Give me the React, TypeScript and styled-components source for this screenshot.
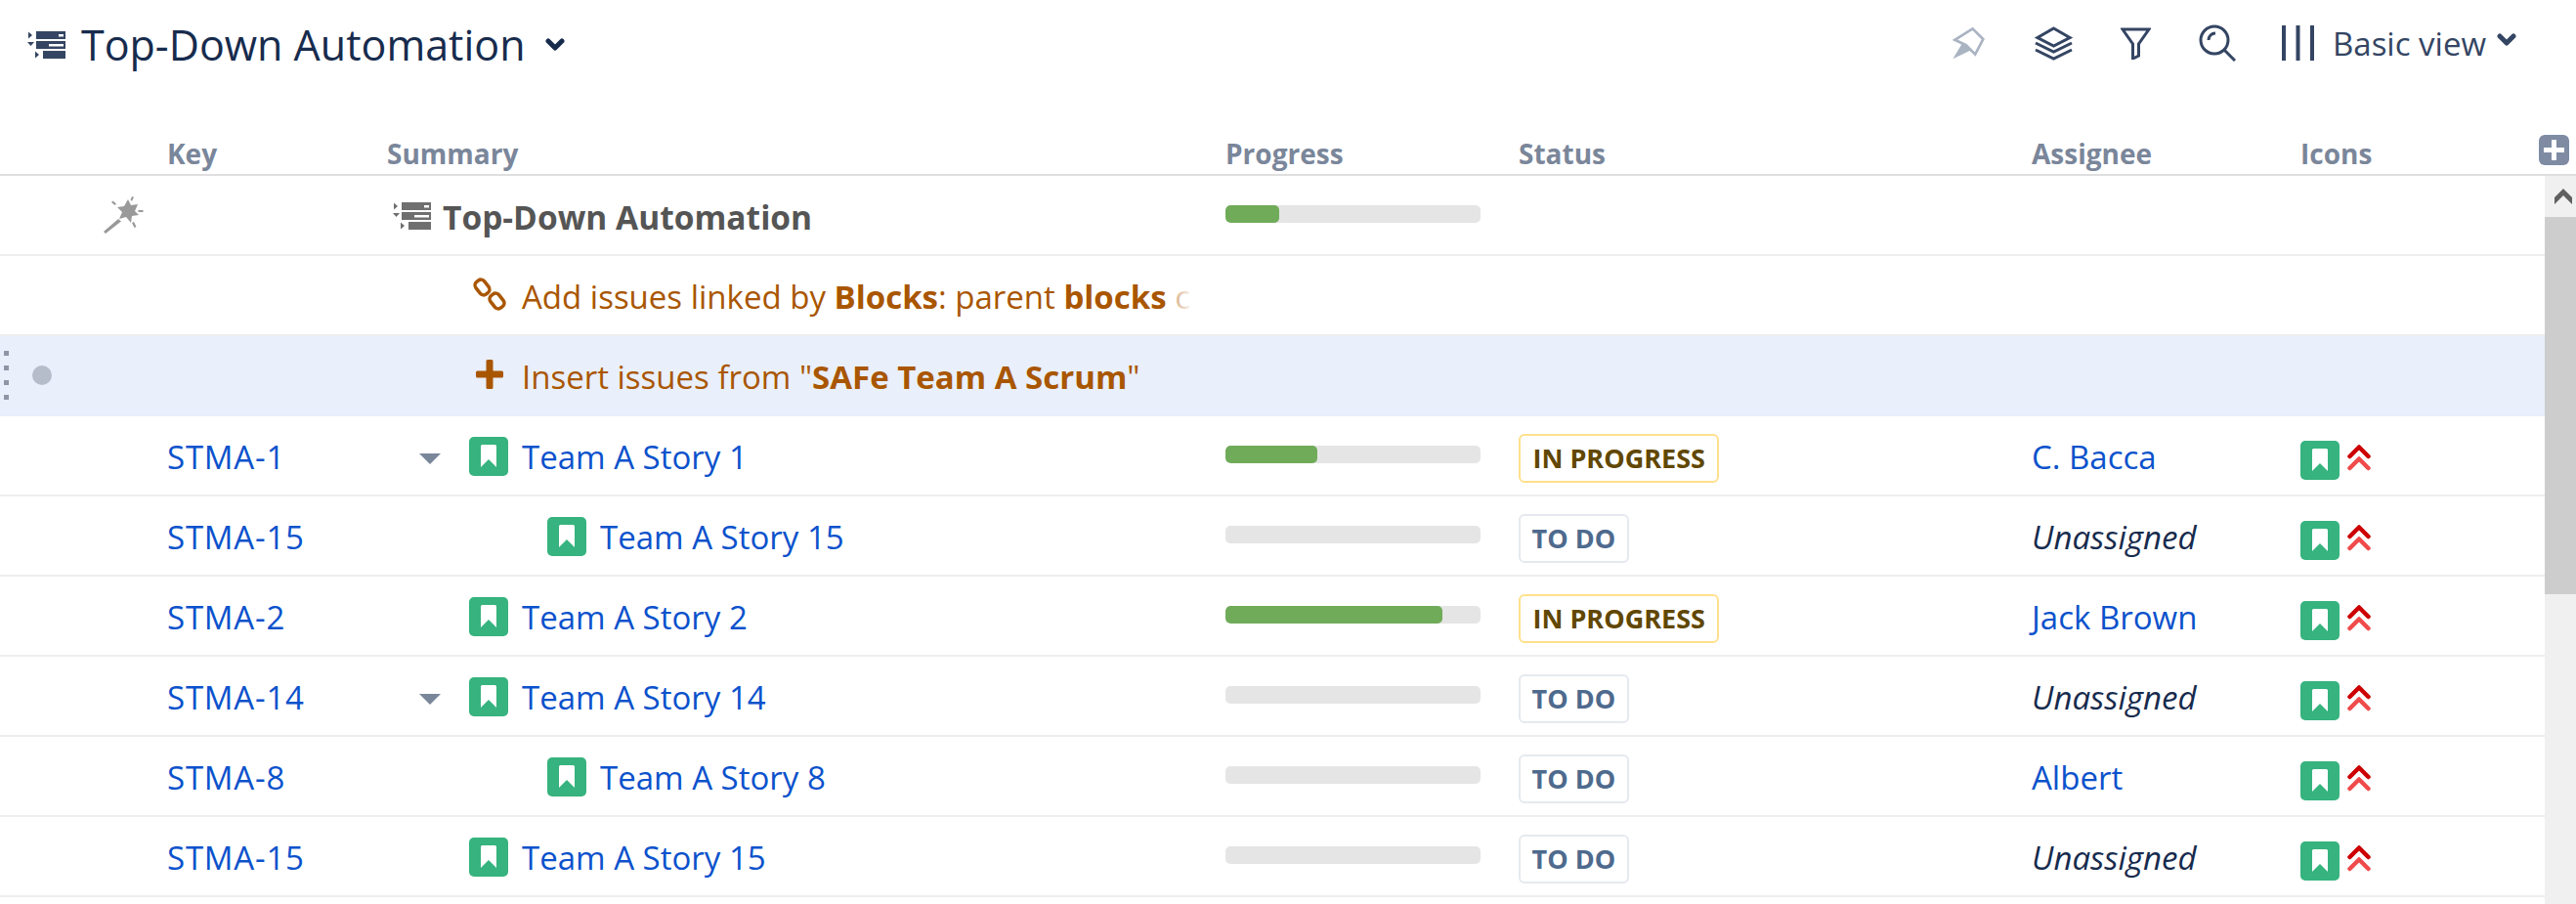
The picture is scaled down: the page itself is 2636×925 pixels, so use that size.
import styled, { createGlobalStyle } from "styled-components";

const GlobalStyle = createGlobalStyle`
  html, body {
    margin: 0;
    padding: 0;
    background: #fff;
    font-family: "Open Sans", "Noto Sans", sans-serif;
  }
`;

const Page = styled.div`
  display: flex;
  flex-direction: column;
  height: 925px;
  overflow: hidden;
`;

const Toolbar = styled.div`
  display: flex;
  justify-content: space-between;
  align-items: flex-start;
  height: 130px;
  box-sizing: border-box;
  padding: 24px 61px 0 28px;
`;

const TitleGroup = styled.div`
  display: flex;
  align-items: center;
  height: 44px;
  color: #172b4d;
`;

const Title = styled.div`
  font-size: 43px;
  line-height: 44px;
  margin: 0 20px 0 16px;
`;

const ToolGroup = styled.div`
  display: flex;
  align-items: center;
  gap: 49px;
  height: 40px;
  color: #344563;
`;

const ViewPicker = styled.div`
  display: flex;
  align-items: center;
  gap: 19px;
  font-size: 33px;
  margin-left: -2px;
`;

const ViewLabel = styled.span`
  margin-right: -8px;
`;

const ViewChevron = styled.div`
  display: flex;
  margin-top: -6px;
`;

const grid = "171px 225px 858px 300px 525px 275px 200px 1fr";

const HeaderRow = styled.div`
  display: grid;
  grid-template-columns: ${grid};
  align-items: center;
  height: 50px;
  box-sizing: border-box;
  border-bottom: 2px solid #dfdfdf;
`;

const HeaderCell = styled.div`
  font-size: 28px;
  font-weight: 700;
  color: #7a869a;
  margin-top: 6px;
`;

const AddColumn = styled.div`
  display: flex;
  justify-content: flex-end;
  padding-right: 7px;
  margin-top: -2px;
`;

const Body = styled.div`
  display: flex;
  flex: 1;
  min-height: 0;
`;

const Rows = styled.div`
  flex: 1;
  min-width: 0;
`;

const Row = styled.div<{ $selected?: boolean }>`
  display: grid;
  grid-template-columns: ${grid};
  align-items: center;
  height: 82px;
  box-sizing: border-box;
  padding-top: 3px;
  font-size: 33px;
  background: ${(p) => (p.$selected ? "#e9effb" : "#fff")};
  border-bottom: 2px solid ${(p) => (p.$selected ? "#e9effb" : "#eeeeee")};
`;

const Gutter = styled.div<{ $wand?: boolean }>`
  display: flex;
  align-items: center;
  gap: 24px;
  margin-top: -3px;
  padding-left: ${(p) => (p.$wand ? "105px" : "4px")};
`;

const Grip = styled.div`
  display: grid;
  gap: 10px;
`;

const GripDot = styled.div`
  width: 5px;
  height: 5px;
  background: #8e95a5;
`;

const Bullet = styled.div`
  width: 20px;
  height: 20px;
  border-radius: 50%;
  background: #b6bdca;
`;

const KeyLink = styled.a`
  color: #0b52cc;
  letter-spacing: 0.8px;
`;

const Summary = styled.div<{ $indent: number }>`
  display: flex;
  align-items: center;
  padding-left: ${(p) => p.$indent}px;
  color: #0b52cc;
  white-space: nowrap;
`;

const Disclosure = styled.div`
  width: 0;
  height: 0;
  margin: 4px 29px 0 -51px;
  border-left: 11px solid transparent;
  border-right: 11px solid transparent;
  border-top: 11px solid #7a869a;
`;

const StoryIcon = styled.div<{ $lower?: boolean }>`
  display: flex;
  align-items: center;
  justify-content: center;
  flex: none;
  width: 40px;
  height: 40px;
  margin-top: ${(p) => (p.$lower ? "6px" : "-2px")};
  border-radius: 5px;
  background: #36b37e;
`;

const SummaryText = styled.span`
  margin-left: 14px;
`;

const RootSummary = styled.div`
  display: flex;
  align-items: center;
  padding-left: 6px;
  font-weight: 700;
  font-size: 33.5px;
  color: #555555;
  white-space: nowrap;
`;

const RootText = styled.span`
  margin-left: 12px;
`;

const Generator = styled.div`
  position: relative;
  display: flex;
  align-items: center;
  width: 836px;
  padding-left: 88px;
  box-sizing: border-box;
  overflow: hidden;
  white-space: nowrap;
  color: #a95600;
`;

const GeneratorIcon = styled.div`
  display: flex;
  align-items: center;
  justify-content: center;
  flex: none;
  width: 34px;
  height: 36px;
  margin-top: -6px;
`;

const GeneratorText = styled.span`
  margin-left: 16px;
`;

const Fade = styled.div`
  position: absolute;
  top: 0;
  right: 0;
  bottom: 0;
  width: 36px;
  background: linear-gradient(to right, rgba(255, 255, 255, 0.4), #fff 70%);
`;

const ProgressTrack = styled.div`
  width: 261px;
  height: 18px;
  margin-top: -6px;
  border-radius: 5px;
  background: #e5e5e5;
  overflow: hidden;
`;

const ProgressFill = styled.div<{ $percent: number }>`
  width: ${(p) => p.$percent}%;
  height: 100%;
  border-radius: 5px;
  background: #70ab59;
`;

const Lozenge = styled.div<{ $tone: "progress" | "todo" }>`
  display: inline-flex;
  align-items: center;
  justify-self: start;
  height: 50px;
  box-sizing: border-box;
  padding: 0 ${(p) => (p.$tone === "progress" ? "12.5px" : "11.5px")};
  margin-top: 2px;
  border-radius: 6px;
  font-size: 27px;
  font-weight: 700;
  background: #fff;
  border: 2px solid ${(p) => (p.$tone === "progress" ? "#ffe08c" : "#e5e9ef")};
  color: ${(p) => (p.$tone === "progress" ? "#614700" : "#4e6a8d")};
`;

const Assignee = styled.a`
  color: #0b52cc;
`;

const Unassigned = styled.span`
  color: #172b4d;
  font-style: italic;
`;

const IconCell = styled.div`
  display: flex;
  align-items: center;
  gap: 8px;
`;

const Scrollbar = styled.div`
  display: flex;
  flex-direction: column;
  flex: none;
  width: 32px;
  background: #f0f0f0;
`;

const ScrollArrow = styled.div`
  display: flex;
  align-items: center;
  justify-content: center;
  height: 42px;
  padding-left: 6px;
`;

const ScrollThumb = styled.div`
  height: 386px;
  background: #cdcdcd;
`;

const StructureIcon = ({ color, size }: { color: string; size: number }) => (
  <svg width={size} height={size * 0.72} viewBox="0 0 39 28" fill={color} style={{ flex: "none" }}>
    <path d="M1 0.5 5 4 1 7.500Z" />
    <path d="M0 11h7l-3.500 4z" />
    <path d="M8 20.500 12 24 8 27.500Z" />
    <path fillRule="evenodd" d="M9 0h30v8H9zM32 3v2.500h5V3z" />
    <path fillRule="evenodd" d="M9 10h30v8H9zM22 13v2.500h15V13z" />
    <path d="M16 20h23v8H16z" />
  </svg>
);

const SmallChevron = ({ color }: { color: string }) => (
  <svg width="20" height="14" viewBox="0 0 20 14" fill="none">
    <path d="M3 3l7 7 7-7" stroke={color} strokeWidth="5" strokeLinecap="round" strokeLinejoin="round" />
  </svg>
);

const Wand = () => (
  <svg width="42" height="38" viewBox="0 0 42 38" fill="#999">
    <path d="M26 3l3 6 7-1-3 7 4 4-7 1-1 7-5-6-7 2 3-7-5-5 7-1z" />
    <path d="M16 23l3 2.500L3 38l-2-2z" />
    <path d="M30 0l2 .7-2 4-1.500-1zM9 6l1.500-1.500 3.500 3-1.500 1.500zM36.500 14h5v2h-5zM30 27l2-1 2.500 5-2 1z" />
  </svg>
);

const PinIcon = () => (
  <svg width="37" height="37" viewBox="75 40 110 110" fill="none" stroke="#aab3c2" strokeWidth="8">
    <path d="M142 50 174 82 150 128 122 100 88 84 Z" />
    <path d="M82 142 112 92 136 116Z" fill="#aab3c2" stroke="none" />
  </svg>
);

const LayersIcon = () => (
  <svg width="39" height="35" viewBox="0 0 39 35" fill="none" stroke="#344563" strokeWidth="3">
    <path d="M19.500 2 36 11.500 19.500 20 3 11.500Z" />
    <path d="M1 17l18.500 9L38 17" />
    <path d="M1 24l18.500 9L38 24" />
  </svg>
);

const FunnelIcon = () => (
  <svg width="31" height="33" viewBox="0 0 31 33" fill="none" stroke="#344563" strokeWidth="3">
    <path d="M2 2h27L18.500 17v12l-6 3V17Z" />
  </svg>
);

const SearchIcon = () => (
  <svg width="38" height="38" viewBox="0 0 38 38" fill="none" stroke="#344563" strokeWidth="3">
    <circle cx="16" cy="16" r="14" />
    <path d="M10 16c0-4 3-7 7-7M26 26l11 11" />
  </svg>
);

const ColumnsIcon = () => (
  <svg width="33" height="36" viewBox="0 0 33 36" fill="#344563">
    <path d="M0 0h4v36H0zM14.500 0h4v36h-4zM29 0h4v36h-4z" />
  </svg>
);

const LinkIcon = () => (
  <svg width="34" height="36" viewBox="0 0 34 36" fill="none" stroke="#a95600" strokeWidth="3.500">
    <rect x="4" y="3" width="11" height="16" rx="4.500" transform="rotate(-38 9.500 11)" />
    <rect x="19" y="17" width="11" height="16" rx="4.500" transform="rotate(-38 24.500 25)" />
  </svg>
);

const PlusIcon = () => (
  <svg width="28" height="30" viewBox="0 0 28 30" fill="#a95600">
    <rect x="10.500" y="0" width="7" height="30" rx="1.500" />
    <rect x="0" y="11.500" width="28" height="7" rx="1.500" />
  </svg>
);

const Bookmark = () => (
  <svg width="18" height="24" viewBox="0 0 18 24" fill="#fff">
    <path d="M1 1.500A1.500 1.500 0 0 1 2.500 0h13A1.500 1.500 0 0 1 17 1.500V23l-8-8-8 8Z" />
  </svg>
);

const Priority = () => (
  <svg width="24" height="28" viewBox="0 0 24 28" fill="none" strokeWidth="4.500" strokeLinecap="round" strokeLinejoin="round">
    <path d="M2.500 13 12 3.500 21.500 13" stroke="#cc0000" />
    <path d="M2.500 25 12 15.500 21.500 25" stroke="#f04b4b" />
  </svg>
);

const PlusButton = () => (
  <svg width="31" height="31" viewBox="0 0 31 31">
    <rect width="31" height="31" rx="6" fill="#7f8ba3" />
    <path d="M13 5h5v8h8v5h-8v8h-5v-8H5v-5h8z" fill="#fff" />
  </svg>
);

type Issue = {
  key: string;
  title: string;
  depth: number;
  expanded?: boolean;
  progress: number;
  status: "IN PROGRESS" | "TO DO";
  assignee?: string;
};

const issues: Issue[] = [
  { key: "STMA-1", title: "Team A Story 1", depth: 0, expanded: true, progress: 36, status: "IN PROGRESS", assignee: "C. Bacca" },
  { key: "STMA-15", title: "Team A Story 15", depth: 1, progress: 0, status: "TO DO" },
  { key: "STMA-2", title: "Team A Story 2", depth: 0, progress: 85, status: "IN PROGRESS", assignee: "Jack Brown" },
  { key: "STMA-14", title: "Team A Story 14", depth: 0, expanded: true, progress: 0, status: "TO DO" },
  { key: "STMA-8", title: "Team A Story 8", depth: 1, progress: 0, status: "TO DO", assignee: "Albert" },
  { key: "STMA-15", title: "Team A Story 15", depth: 0, progress: 0, status: "TO DO" },
];

const columns = ["Key", "Summary", "Progress", "Status", "Assignee", "Icons"];

export default function App() {
  return (
    <Page>
      <GlobalStyle />
      <Toolbar>
        <TitleGroup>
          <StructureIcon color="#344563" size={39} />
          <Title>Top-Down Automation</Title>
          <SmallChevron color="#172b4d" />
        </TitleGroup>
        <ToolGroup>
          <PinIcon />
          <LayersIcon />
          <FunnelIcon />
          <SearchIcon />
          <ViewPicker>
            <ColumnsIcon />
            <ViewLabel>Basic view</ViewLabel>
            <ViewChevron>
              <SmallChevron color="#344563" />
            </ViewChevron>
          </ViewPicker>
        </ToolGroup>
      </Toolbar>
      <HeaderRow>
        <div />
        {columns.map((c) => (
          <HeaderCell key={c}>{c}</HeaderCell>
        ))}
        <AddColumn>
          <PlusButton />
        </AddColumn>
      </HeaderRow>
      <Body>
        <Rows>
          <Row>
            <Gutter $wand>
              <Wand />
            </Gutter>
            <div />
            <RootSummary>
              <StructureIcon color="#6f6f6f" size={39} />
              <RootText>Top-Down Automation</RootText>
            </RootSummary>
            <ProgressTrack>
              <ProgressFill $percent={21} />
            </ProgressTrack>
          </Row>
          <Row>
            <div />
            <div />
            <Generator>
              <GeneratorIcon>
                <LinkIcon />
              </GeneratorIcon>
              <GeneratorText>
                Add issues linked by <b>Blocks</b>: parent <b>blocks</b> children
              </GeneratorText>
              <Fade />
            </Generator>
          </Row>
          <Row $selected>
            <Gutter>
              <Grip>
                <GripDot />
                <GripDot />
                <GripDot />
                <GripDot />
              </Grip>
              <Bullet />
            </Gutter>
            <div />
            <Generator>
              <GeneratorIcon>
                <PlusIcon />
              </GeneratorIcon>
              <GeneratorText>
                Insert issues from "<b>SAFe Team A Scrum</b>"
              </GeneratorText>
            </Generator>
          </Row>
          {issues.map((issue, i) => (
            <Row key={i}>
              <div />
              <KeyLink>{issue.key}</KeyLink>
              <Summary $indent={84 + issue.depth * 80}>
                {issue.expanded && <Disclosure />}
                <StoryIcon>
                  <Bookmark />
                </StoryIcon>
                <SummaryText>{issue.title}</SummaryText>
              </Summary>
              <ProgressTrack>
                <ProgressFill $percent={issue.progress} />
              </ProgressTrack>
              <Lozenge $tone={issue.status === "TO DO" ? "todo" : "progress"}>{issue.status}</Lozenge>
              <div>
                {issue.assignee ? <Assignee>{issue.assignee}</Assignee> : <Unassigned>Unassigned</Unassigned>}
              </div>
              <IconCell>
                <StoryIcon $lower>
                  <Bookmark />
                </StoryIcon>
                <Priority />
              </IconCell>
            </Row>
          ))}
        </Rows>
        <Scrollbar>
          <ScrollArrow>
            <svg width="18" height="16" viewBox="0 0 18 16" fill="#606060">
              <path d="M9 0l9 9v7L9 7 0 16V9z" />
            </svg>
          </ScrollArrow>
          <ScrollThumb />
        </Scrollbar>
      </Body>
    </Page>
  );
}
